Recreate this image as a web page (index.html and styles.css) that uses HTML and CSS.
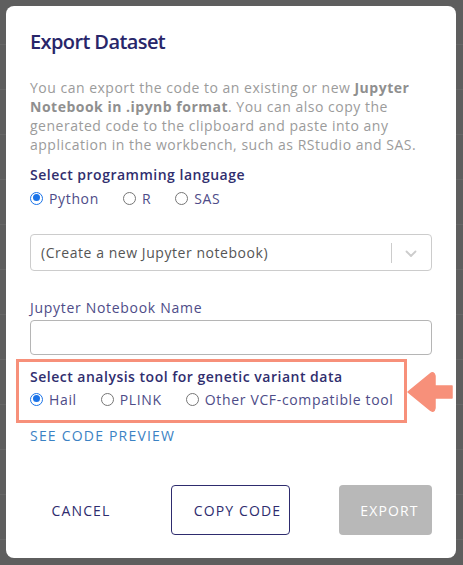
FILE: index.html
```html
<!DOCTYPE html>
<html lang="en">
<head>
<meta charset="utf-8">
<title>Export Dataset</title>
<link rel="stylesheet" href="styles.css">
</head>
<body>
<div class="backdrop">
  <div class="modal">
    <h1 class="title">Export Dataset</h1>
    <p class="intro">You can export the code to an existing or new <b>Jupyter</b> <b>Notebook in .ipynb format</b>. You can also copy the generated code to the clipboard and paste into any application in the workbench, such as RStudio and SAS.</p>

    <div class="group-label">Select programming language</div>
    <div class="radios">
      <label class="opt"><span class="radio checked"></span>Python</label>
      <label class="opt"><span class="radio"></span>R</label>
      <label class="opt"><span class="radio"></span>SAS</label>
    </div>

    <div class="select">
      <span class="select-value">(Create a new Jupyter notebook)</span>
      <span class="select-sep"></span>
      <svg class="chevron" width="12" height="8" viewBox="0 0 12 8"><path d="M1.5 1.5 L6 6 L10.5 1.5" fill="none" stroke="#cccccc" stroke-width="1.8" stroke-linecap="round" stroke-linejoin="round"/></svg>
    </div>

    <div class="field-label">Jupyter Notebook Name</div>
    <div class="input"></div>

    <div class="highlight">
      <div class="group-label">Select analysis tool for genetic variant data</div>
      <div class="radios">
        <label class="opt"><span class="radio checked"></span>Hail</label>
        <label class="opt"><span class="radio"></span>PLINK</label>
        <label class="opt"><span class="radio"></span>Other VCF-compatible tool</label>
      </div>
    </div>

    <a class="preview">SEE CODE PREVIEW</a>

    <div class="footer">
      <button class="btn cancel">CANCEL</button>
      <button class="btn copy">COPY CODE</button>
      <button class="btn export">EXPORT</button>
    </div>

    <svg class="arrow" width="48" height="42" viewBox="0 0 48 42">
      <path d="M2 21 L24 3 Q28 0 29 5 L29 15 L46 15 L46 27 L29 27 L29 37 Q28 42 24 39 Z" fill="#f7907a" stroke="#f7907a" stroke-width="1.5" stroke-linejoin="round"/>
    </svg>
  </div>
</div>
</body>
</html>
```

FILE: styles.css
```css
html, body {
  margin: 0;
  padding: 0;
}
body {
  width: 463px;
  height: 565px;
  overflow: hidden;
  background: #5e5e5e;
  font-family: "Open Sans", "Liberation Sans", sans-serif;
}
.backdrop {
  height: 565px;
  padding: 6px 7px 0 6px;
  box-sizing: border-box;
  background: repeating-linear-gradient(to bottom, #5e5e5e 0, #5e5e5e 44px, #676767 44px, #676767 45px);
}
.modal {
  position: relative;
  width: 450px;
  height: 552px;
  box-sizing: border-box;
  padding: 22px 24px 0 24px;
  background: #ffffff;
  border-radius: 8px;
}
.title {
  margin: 0;
  font-size: 20px;
  line-height: 28px;
  font-weight: 600;
  letter-spacing: -0.6px;
  color: #28266a;
}
.intro {
  margin: 22px 0 0 0;
  font-size: 14px;
  line-height: 19px;
  letter-spacing: 0.5px;
  color: #9b9b9b;
}
.intro b {
  font-weight: 700;
  color: #8f8f8f;
}
.group-label {
  margin-top: 11px;
  font-size: 14px;
  line-height: 19px;
  font-weight: 600;
  letter-spacing: 0.5px;
  color: #302e6e;
}
.radios {
  display: flex;
  gap: 24px;
  height: 20px;
  margin-top: 4px;
  align-items: center;
}
.opt {
  display: flex;
  align-items: center;
  gap: 6px;
  font-size: 14px;
  line-height: 19px;
  letter-spacing: 0.65px;
  color: #4e4c88;
}
.radio {
  width: 13px;
  height: 13px;
  box-sizing: border-box;
  border: 1px solid #767676;
  border-radius: 50%;
  background: #fff;
  position: relative;
}
.radio.checked {
  border: 1.5px solid #1a73e8;
}
.radio.checked::after {
  content: "";
  position: absolute;
  left: 1.5px;
  top: 1.5px;
  width: 7px;
  height: 7px;
  border-radius: 50%;
  background: #1a73e8;
}
.select {
  margin-top: 26px;
  height: 37px;
  box-sizing: border-box;
  border: 1px solid #cccccc;
  border-radius: 4px;
  display: flex;
  align-items: center;
  padding-left: 10px;
}
.select-value {
  flex: 1;
  font-size: 14px;
  letter-spacing: 0.55px;
  color: #555555;
}
.select-sep {
  width: 1px;
  height: 20px;
  background: #cccccc;
}
.chevron {
  margin: 2px 14px 0 13px;
}
.field-label {
  margin-top: 27px;
  font-size: 14px;
  line-height: 19px;
  letter-spacing: 0.7px;
  color: #4e4c88;
}
.input {
  margin-top: 3px;
  height: 35px;
  box-sizing: border-box;
  border: 1px solid #b5b5b5;
  border-radius: 4px;
}
.highlight {
  margin: 4px 0 0 -14px;
  width: 391px;
  box-sizing: border-box;
  border: 3px solid #f7907a;
  padding: 5px 0 11px 11px;
}
.highlight .group-label {
  margin-top: 0;
}
.highlight .radios {
  margin-top: 3px;
}
.preview {
  display: block;
  margin-top: 3px;
  font-size: 14px;
  line-height: 19px;
  font-weight: 500;
  letter-spacing: 1.2px;
  color: #3b82c4;
}
.footer {
  display: flex;
  margin-top: 40px;
}
.btn {
  height: 50px;
  box-sizing: border-box;
  font-family: inherit;
  font-size: 14px;
  font-weight: 500;
  letter-spacing: 1.15px;
  border-radius: 4px;
  border: none;
  background: none;
  color: #2e2c6e;
  padding: 0;
}
.cancel {
  width: 102px;
}
.copy {
  width: 119px;
  margin-left: 39px;
  border: 1px solid #2e2c6e;
  padding-left: 14px;
}
.export {
  width: 93px;
  margin-left: auto;
  background: #b8b8b8;
  color: #ffffff;
  padding-left: 8px;
}
.arrow {
  position: absolute;
  left: 400px;
  top: 365px;
}
```
